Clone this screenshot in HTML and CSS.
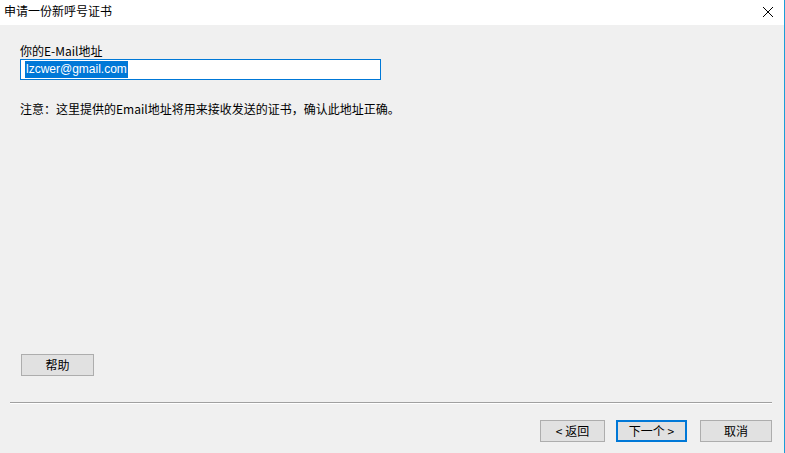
FILE: index.html
```html
<!doctype html>
<html>
<head>
	<meta charset='utf-8'>
	<title>申请一份新呼号证书</title>

	<link rel="stylesheet" href="styles.css">
</head>
<body>

	<div class='window'>
		<div class='titlebar'>
			<span class='title'>申请一份新呼号证书</span>
			<svg class='close' width='12' height='12' viewBox='0 0 12 12'>
				<path d='M1 1 L11 11 M11 1 L1 11' stroke='#000' stroke-width='1' fill='none'/>
			</svg>
		</div>

		<div class='content'>
			<div class='page'>
				<label class='field-label'>你的E-Mail地址</label>
				<div class='field'><span class='selected'>lzcwer@gmail.com</span></div>
				<p class='note'>注意：这里提供的Email地址将用来接收发送的证书，确认此地址正确。</p>
			</div>

			<div class='help-row'>
				<button class='btn help'>帮助</button>
			</div>

			<div class='separator'></div>

			<div class='actions'>
				<button class='btn back'>&lt; 返回</button>
				<button class='btn next'>下一个 &gt;</button>
				<button class='btn cancel'>取消</button>
			</div>
		</div>
	</div>

</body>
</html>
```

FILE: styles.css
```css
html, body {
	margin: 0;
	padding: 0;
}

body {
	font-family: "Noto Sans", "Noto Sans CJK SC", sans-serif;
	font-size: 12px;
	color: #000;
}

/* the dialog window */
.window {
	width: 784px;
	height: 453px;
	border-right: 1px solid #1b9ed8;
	background: #f0f0f0;
	display: flex;
	flex-direction: column;
}

.titlebar {
	height: 25px;
	background: #fff;
	display: flex;
	align-items: center;
	justify-content: space-between;
	padding: 0 10px 0 4px;
}

.title {
	font-family: "Noto Sans CJK SC", sans-serif;
	font-size: 12px;
	line-height: 14px;
	margin-top: -3px;
}

.close {
	margin-top: -2px;
}

.content {
	flex: 1;
	display: flex;
	flex-direction: column;
}

/* the wizard page */
.page {
	flex: 1;
	padding: 18px 0 0 20px;
}

.field-label {
	display: block;
	font-family: "Noto Sans CJK SC", sans-serif;
	line-height: 15px;
	height: 16px;
}

.field {
	width: 355px;
	height: 19px;
	border: 1px solid #0078d7;
	background: #fff;
	padding-left: 4px;
	box-sizing: content-box;
	line-height: 18px;
	font-family: "Liberation Sans", sans-serif;
	font-size: 12px;
}

.selected {
	background: #0078d7;
	color: #fff;
	display: inline-block;
	line-height: 17px;
	padding: 0 1px;
}

.note {
	margin: 22px 0 0 0;
	font-family: "Noto Sans CJK SC", sans-serif;
	line-height: 14px;
}

.help-row {
	padding-left: 21px;
	height: 22px;
}

.separator {
	margin: 26px 12px 0 10px;
	height: 1px;
	background: #a0a0a0;
	border-bottom: 1px solid #fff;
}

.actions {
	display: flex;
	justify-content: flex-end;
	padding: 16px 12px 0 0;
	height: 22px;
	margin-bottom: 11px;
}

/* push buttons */
.btn {
	font-family: "Noto Sans CJK SC", sans-serif;
	font-size: 12px;
	height: 22px;
	margin: 0;
	padding: 0;
	background: #e1e1e1;
	border: 1px solid #adadad;
	color: #000;
	line-height: 18px;
}

.help {
	width: 73px;
}

.back {
	width: 65px;
}

.next {
	width: 71px;
	margin-left: 11px;
	border: 2px solid #0078d7;
}

.cancel {
	width: 72px;
	margin-left: 13px;
}
```
